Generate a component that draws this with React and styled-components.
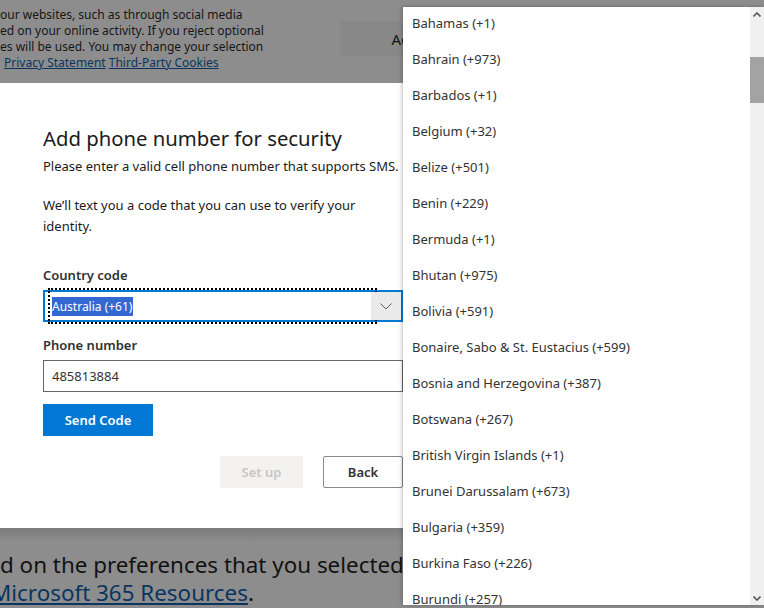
import React from "react";
import styled, { createGlobalStyle } from "styled-components";

const GlobalStyle = createGlobalStyle`
  html, body { margin: 0; padding: 0; }
  body {
    background: #8d8d8d;
    font-family: "Noto Sans", "Open Sans", sans-serif;
    -webkit-font-smoothing: antialiased;
  }
`;

const Page = styled.div`
  position: relative;
  width: 764px;
  height: 608px;
  overflow: hidden;
  background: #8d8d8d;
`;

/* dimmed cookie banner behind the modal */
const Banner = styled.div`
  height: 83px;
  display: flex;
  align-items: flex-start;
`;

const BannerText = styled.div`
  width: 340px;
  padding-top: 7px;
  font-size: 12px;
  line-height: 16px;
  color: #161616;
  white-space: nowrap;
`;

const BannerLink = styled.a`
  color: #0a3560;
  text-decoration: underline;
  margin-left: ${(p) => p.$gap || 0}px;
`;

const BannerButton = styled.div`
  margin-top: 21px;
  width: 150px;
  height: 35px;
  background: #888888;
  display: flex;
  align-items: center;
  justify-content: center;
  font-size: 15px;
  color: #141414;
`;

/* modal */
const Dialog = styled.div`
  width: 446px;
  height: 445px;
  background: #ffffff;
  box-sizing: border-box;
  padding: 41px 43px 0 43px;
  color: #1b1b1b;
`;

const Title = styled.h1`
  margin: 0;
  font-size: 20.3px;
  font-weight: 400;
  line-height: 28px;
  color: #1b1b1b;
`;

const Para = styled.p`
  margin: ${(p) => p.$mt}px 0 0 0;
  font-size: 13px;
  line-height: 21px;
  color: #1b1b1b;
`;

const Label = styled.div`
  margin-top: ${(p) => p.$mt}px;
  font-size: 13px;
  font-weight: 600;
  line-height: 18px;
  color: #323130;
`;

const Select = styled.div`
  margin-top: 6px;
  width: 360px;
  height: 32px;
  box-sizing: border-box;
  border: 2px solid #0078d4;
  display: flex;
  background: #fff;
`;

const SelectValue = styled.div`
  position: relative;
  flex: 1;
  display: flex;
  align-items: center;
  padding-left: 7px;

  &::before {
    content: "";
    position: absolute;
    left: 3px;
    top: -4px;
    bottom: -4px;
    right: -6px;
    border: 2px dotted #000;
  }
`;

const Highlight = styled.span`
  background: #3367d1;
  color: #fff;
  font-size: 12px;
  line-height: 19px;
  padding: 0 1px 0 0;
`;

const Chevron = styled.div`
  position: relative;
  z-index: 1;
  width: 30px;
  background: #ebeaea;
  display: flex;
  align-items: center;
  justify-content: center;
`;

const Input = styled.div`
  margin-top: 6px;
  width: 360px;
  height: 32px;
  box-sizing: border-box;
  border: 1px solid #666;
  display: flex;
  align-items: center;
  padding-left: 8px;
  font-size: 13px;
  color: #333;
`;

const PrimaryButton = styled.button`
  margin-top: 12px;
  width: 110px;
  height: 32px;
  border: none;
  background: #0078d4;
  color: #fff;
  font-family: inherit;
  font-size: 13px;
  font-weight: 600;
  padding: 0;
`;

const Actions = styled.div`
  margin-top: 20px;
  width: 360px;
  display: flex;
  justify-content: flex-end;
  gap: 20px;
`;

const ActionButton = styled.button`
  width: ${(p) => p.$w}px;
  height: 32px;
  box-sizing: border-box;
  font-family: inherit;
  font-size: 13px;
  font-weight: 600;
  padding: 0;
  border: ${(p) => (p.$disabled ? "none" : "1px solid #8a8886")};
  background: ${(p) => (p.$disabled ? "#f3f2f1" : "#fff")};
  color: ${(p) => (p.$disabled ? "#c8c6c4" : "#323130")};
  border-radius: 2px;
`;

/* dimmed page text under the modal */
const Footer = styled.div`
  height: 80px;
  background: linear-gradient(to bottom, rgba(0, 0, 0, 0.12), rgba(0, 0, 0, 0) 14px), #8d8d8d;
  padding-top: 23px;
  box-sizing: border-box;
  font-size: 22.4px;
  line-height: 28px;
  color: #121212;
  white-space: nowrap;
`;

const FooterLink = styled.a`
  display: inline-block;
  margin-left: -9px;
  color: #0a3560;
  text-decoration: underline;
`;

/* open country list */
const Menu = styled.div`
  position: absolute;
  left: 403px;
  top: 7px;
  width: 361px;
  height: 598px;
  background: #fff;
  box-shadow: -1px 0 4px rgba(0, 0, 0, 0.25);
  display: flex;
`;

const Options = styled.ul`
  flex: 1;
  margin: 0;
  padding: 0;
  list-style: none;
  overflow: hidden;
`;

const OptionList = styled.div`
  margin-top: -2px;
`;

const Option = styled.li`
  height: 36px;
  display: flex;
  align-items: center;
  padding-left: 9px;
  font-size: 13px;
  color: #333;
  white-space: nowrap;
`;

const Scrollbar = styled.div`
  width: 14px;
  background: #f0f0f0;
  display: flex;
  flex-direction: column;
  align-items: center;
`;

const ScrollArrow = styled.div`
  height: ${(p) => p.$h}px;
  display: flex;
  align-items: center;
  justify-content: center;
`;

const Thumb = styled.div`
  margin-top: ${(p) => p.$top}px;
  width: 14px;
  height: 46px;
  background: #a3a3a3;
`;

const Spacer = styled.div`
  flex: 1;
`;

const countries = [
  "Bahamas (+1)",
  "Bahrain (+973)",
  "Barbados (+1)",
  "Belgium (+32)",
  "Belize (+501)",
  "Benin (+229)",
  "Bermuda (+1)",
  "Bhutan (+975)",
  "Bolivia (+591)",
  "Bonaire, Sabo & St. Eustacius (+599)",
  "Bosnia and Herzegovina (+387)",
  "Botswana (+267)",
  "British Virgin Islands (+1)",
  "Brunei Darussalam (+673)",
  "Bulgaria (+359)",
  "Burkina Faso (+226)",
  "Burundi (+257)",
];

const ChevronDown = () => (
  <svg width="12" height="7" viewBox="0 0 12 7" fill="none">
    <path d="M0.5 0.5 L6 6 L11.5 0.5" stroke="#605e5c" strokeWidth="1" />
  </svg>
);

const ArrowGlyph = ({ up }) => (
  <svg width="8" height="5" viewBox="0 0 8 5">
    <path
      d={up ? "M0.5 4.5 L4 1 L7.5 4.5" : "M0.5 0.5 L4 4 L7.5 0.5"}
      stroke="#5a5a5a"
      strokeWidth="1.6"
      fill="none"
    />
  </svg>
);

export default function App() {
  return (
    <Page>
      <GlobalStyle />
      <Banner>
        <BannerText>
          <div>our websites, such as through social media</div>
          <div>ed on your online activity. If you reject optional</div>
          <div>es will be used. You may change your selection</div>
          <div>
            <BannerLink href="#" $gap={4}>Privacy Statement</BannerLink>{" "}
            <BannerLink href="#">Third-Party Cookies</BannerLink>
          </div>
        </BannerText>
        <BannerButton>Accept</BannerButton>
      </Banner>

      <Dialog>
        <Title>Add phone number for security</Title>
        <Para $mt={4}>Please enter a valid cell phone number that supports SMS.</Para>
        <Para $mt={18}>
          We’ll text you a code that you can use to verify your
          <br />
          identity.
        </Para>
        <Label $mt={29}>Country code</Label>
        <Select>
          <SelectValue>
            <Highlight>Australia (+61)</Highlight>
          </SelectValue>
          <Chevron>
            <ChevronDown />
          </Chevron>
        </Select>
        <Label $mt={14}>Phone number</Label>
        <Input>485813884</Input>
        <PrimaryButton>Send Code</PrimaryButton>
        <Actions>
          <ActionButton $w={83} $disabled>Set up</ActionButton>
          <ActionButton $w={80}>Back</ActionButton>
        </Actions>
      </Dialog>

      <Footer>
        <div>d on the preferences that you selected</div>
        <FooterLink href="#">Microsoft 365 Resources</FooterLink>.
      </Footer>

      <Menu>
        <Options>
          <OptionList>
            {countries.map((c) => (
              <Option key={c}>{c}</Option>
            ))}
          </OptionList>
        </Options>
        <Scrollbar>
          <ScrollArrow $h={14}>
            <ArrowGlyph up />
          </ScrollArrow>
          <Thumb $top={36} />
          <Spacer />
          <ScrollArrow $h={14}>
            <ArrowGlyph />
          </ScrollArrow>
        </Scrollbar>
      </Menu>
    </Page>
  );
}
